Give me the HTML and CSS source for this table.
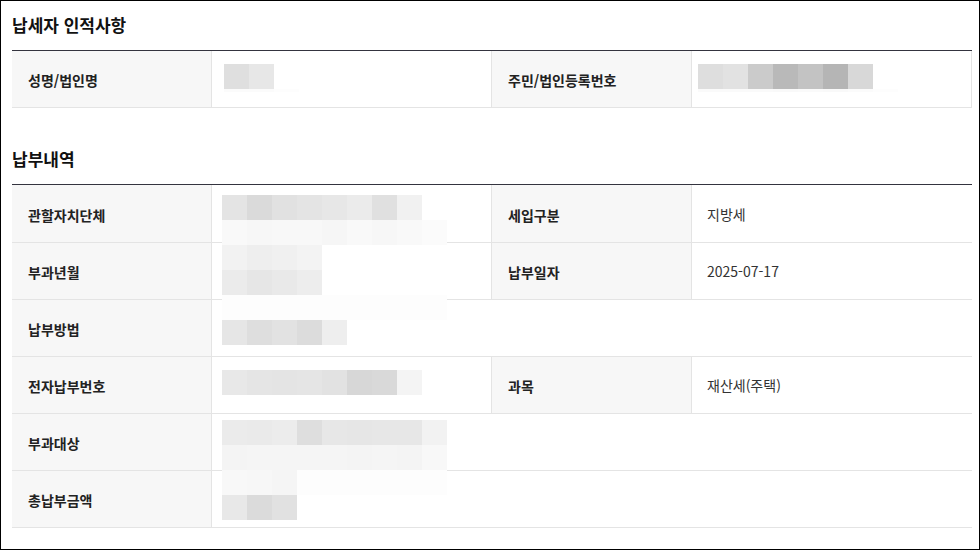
FILE: index.html
```html
<!DOCTYPE html>
<html lang="ko">
<head>
<meta charset="utf-8">
<title>납부내역</title>
<link rel="stylesheet" href="styles.css">
</head>
<body>
<div class="page">
  <section class="sec">
    <h2 class="sec-title">납세자 인적사항</h2>
    <div class="tbl tbl-boxed">
      <div class="th">성명/법인명</div>
      <div class="td td-blur mid pl-12">
        <div class="blur off-13">
          <div class="brow"><i class="g-df"></i><i class="g-e7"></i></div>
          <div class="brow thin"><i class="g-fb"></i><i class="g-fb"></i><i class="g-fd"></i></div>
        </div>
      </div>
      <div class="th">주민/법인등록번호</div>
      <div class="td td-blur last pl-6">
        <div class="blur off-13">
          <div class="brow"><i class="g-de"></i><i class="g-e2"></i><i class="g-cb"></i><i class="g-b9"></i><i class="g-c3"></i><i class="g-b5"></i><i class="g-d8"></i></div>
          <div class="brow thin"><i class="g-fa"></i><i class="g-fa"></i><i class="g-fa"></i><i class="g-f9"></i><i class="g-fa"></i><i class="g-f9"></i><i class="g-fb"></i><i class="g-fd"></i></div>
        </div>
      </div>
    </div>
  </section>

  <section class="sec sec-2">
    <h2 class="sec-title">납부내역</h2>
    <div class="tbl">
      <div class="th tall">관할자치단체</div>
      <div class="td td-blur mid tall">
        <div class="blur off-10">
          <div class="brow"><i class="g-e4"></i><i class="g-da"></i><i class="g-e1"></i><i class="g-e4"></i><i class="g-e7"></i><i class="g-eb"></i><i class="g-e0"></i><i class="g-f1"></i></div>
          <div class="brow"><i class="g-f9"></i><i class="g-f7"></i><i class="g-f8"></i><i class="g-f8"></i><i class="g-f6"></i><i class="g-f9"></i><i class="g-f7"></i><i class="g-f9"></i><i class="g-fb"></i></div>
        </div>
      </div>
      <div class="th tall">세입구분</div>
      <div class="td tall">지방세</div>

      <div class="th">부과년월</div>
      <div class="td td-blur mid">
        <div class="blur off-2">
          <div class="brow"><i class="g-f2"></i><i class="g-ee"></i><i class="g-f0"></i><i class="g-f3"></i></div>
          <div class="brow"><i class="g-eb"></i><i class="g-e6"></i><i class="g-e9"></i><i class="g-ed"></i></div>
        </div>
      </div>
      <div class="th">납부일자</div>
      <div class="td">2025-07-17</div>

      <div class="th">납부방법</div>
      <div class="td td-blur span3">
        <div class="blur off-n5">
          <div class="brow"><i class="g-fd"></i><i class="g-fd"></i><i class="g-fd"></i><i class="g-fd"></i><i class="g-fd"></i><i class="g-fd"></i><i class="g-fd"></i><i class="g-fd"></i><i class="g-fd"></i></div>
          <div class="brow"><i class="g-e6"></i><i class="g-de"></i><i class="g-e2"></i><i class="g-dc"></i><i class="g-ee"></i></div>
        </div>
      </div>

      <div class="th">전자납부번호</div>
      <div class="td td-blur mid">
        <div class="blur off-13">
          <div class="brow"><i class="g-e8"></i><i class="g-e5"></i><i class="g-e4"></i><i class="g-e5"></i><i class="g-e2"></i><i class="g-d7"></i><i class="g-d9"></i><i class="g-f4"></i></div>
        </div>
      </div>
      <div class="th">과목</div>
      <div class="td">재산세(주택)</div>

      <div class="th">부과대상</div>
      <div class="td td-blur span3">
        <div class="blur off-6">
          <div class="brow"><i class="g-eb"></i><i class="g-ea"></i><i class="g-ec"></i><i class="g-de"></i><i class="g-e7"></i><i class="g-e6"></i><i class="g-e7"></i><i class="g-e7"></i><i class="g-f2"></i></div>
          <div class="brow"><i class="g-f4"></i><i class="g-f5"></i><i class="g-f5"></i><i class="g-f5"></i><i class="g-f5"></i><i class="g-f4"></i><i class="g-f5"></i><i class="g-f4"></i><i class="g-f8"></i></div>
        </div>
      </div>

      <div class="th">총납부금액</div>
      <div class="td td-blur span3">
        <div class="blur off-n1">
          <div class="brow"><i class="g-f8"></i><i class="g-f7"></i><i class="g-f5"></i><i class="g-fd"></i><i class="g-fd"></i><i class="g-fd"></i><i class="g-fd"></i><i class="g-fd"></i><i class="g-fd"></i></div>
          <div class="brow"><i class="g-e8"></i><i class="g-db"></i><i class="g-e1"></i></div>
        </div>
      </div>
    </div>
  </section>
</div>
</body>
</html>
```

FILE: styles.css
```css
* { box-sizing: border-box; }
html, body { margin: 0; padding: 0; background: #fff; }
body {
  font-family: "Noto Sans CJK KR", "Noto Sans", sans-serif;
  color: #222;
}
.page {
  width: 980px;
  height: 550px;
  border: 1px solid #000;
  padding: 0 7px 0 11px;
  overflow: hidden;
}
.sec-title {
  margin: 0;
  height: 49px;
  display: flex;
  align-items: center;
  padding-bottom: 3px;
  font-size: 17px;
  font-weight: 700;
  color: #111;
}
.sec-2 { margin-top: 27px; }

.tbl {
  display: grid;
  grid-template-columns: 200px 280px 200px 280px;
  border-top: 1px solid #34343f;
}
.th, .td {
  height: 57px;
  border-bottom: 1px solid #e4e4e4;
  display: flex;
  align-items: center;
  font-size: 14px;
}
.tall { height: 58px; }
.th {
  background: #f7f7f7;
  border-right: 1px solid #e4e4e4;
  padding-left: 16px;
  padding-top: 2px;
  font-weight: 700;
  color: #222;
}
.td {
  padding-left: 15px;
  color: #333;
}
.td.mid { border-right: 1px solid #e4e4e4; }
.tbl-boxed .td.last { border-right: 1px solid #e4e4e4; }
.span3 { grid-column: span 3; }

.td-blur {
  align-items: flex-start;
  padding-left: 10px;
  overflow: visible;
}
.pl-12 { padding-left: 12px; }
.pl-6 { padding-left: 6px; }
.blur { display: flex; flex-direction: column; }
.off-2 { margin-top: 2px; }
.off-6 { margin-top: 6px; }
.off-10 { margin-top: 10px; }
.off-13 { margin-top: 13px; }
.off-n1 { margin-top: -1px; }
.off-n5 { margin-top: -5px; }
.brow { display: flex; }
.brow i { display: block; width: 25px; height: 25px; }
.brow.thin i { height: 3px; }

.g-b5 { background: #b5b5b5; }
.g-b9 { background: #b9b9b9; }
.g-c3 { background: #c3c3c3; }
.g-cb { background: #cbcbcb; }
.g-d7 { background: #d7d7d7; }
.g-d8 { background: #d8d8d8; }
.g-d9 { background: #d9d9d9; }
.g-da { background: #dadada; }
.g-db { background: #dbdbdb; }
.g-dc { background: #dcdcdc; }
.g-de { background: #dedede; }
.g-df { background: #dfdfdf; }
.g-e0 { background: #e0e0e0; }
.g-e1 { background: #e1e1e1; }
.g-e2 { background: #e2e2e2; }
.g-e4 { background: #e4e4e4; }
.g-e5 { background: #e5e5e5; }
.g-e6 { background: #e6e6e6; }
.g-e7 { background: #e7e7e7; }
.g-e8 { background: #e8e8e8; }
.g-e9 { background: #e9e9e9; }
.g-ea { background: #eaeaea; }
.g-eb { background: #ebebeb; }
.g-ec { background: #ececec; }
.g-ed { background: #ededed; }
.g-ee { background: #eeeeee; }
.g-f0 { background: #f0f0f0; }
.g-f1 { background: #f1f1f1; }
.g-f2 { background: #f2f2f2; }
.g-f3 { background: #f3f3f3; }
.g-f4 { background: #f4f4f4; }
.g-f5 { background: #f5f5f5; }
.g-f6 { background: #f6f6f6; }
.g-f7 { background: #f7f7f7; }
.g-f8 { background: #f8f8f8; }
.g-f9 { background: #f9f9f9; }
.g-fa { background: #fafafa; }
.g-fb { background: #fbfbfb; }
.g-fd { background: #fdfdfd; }
```
